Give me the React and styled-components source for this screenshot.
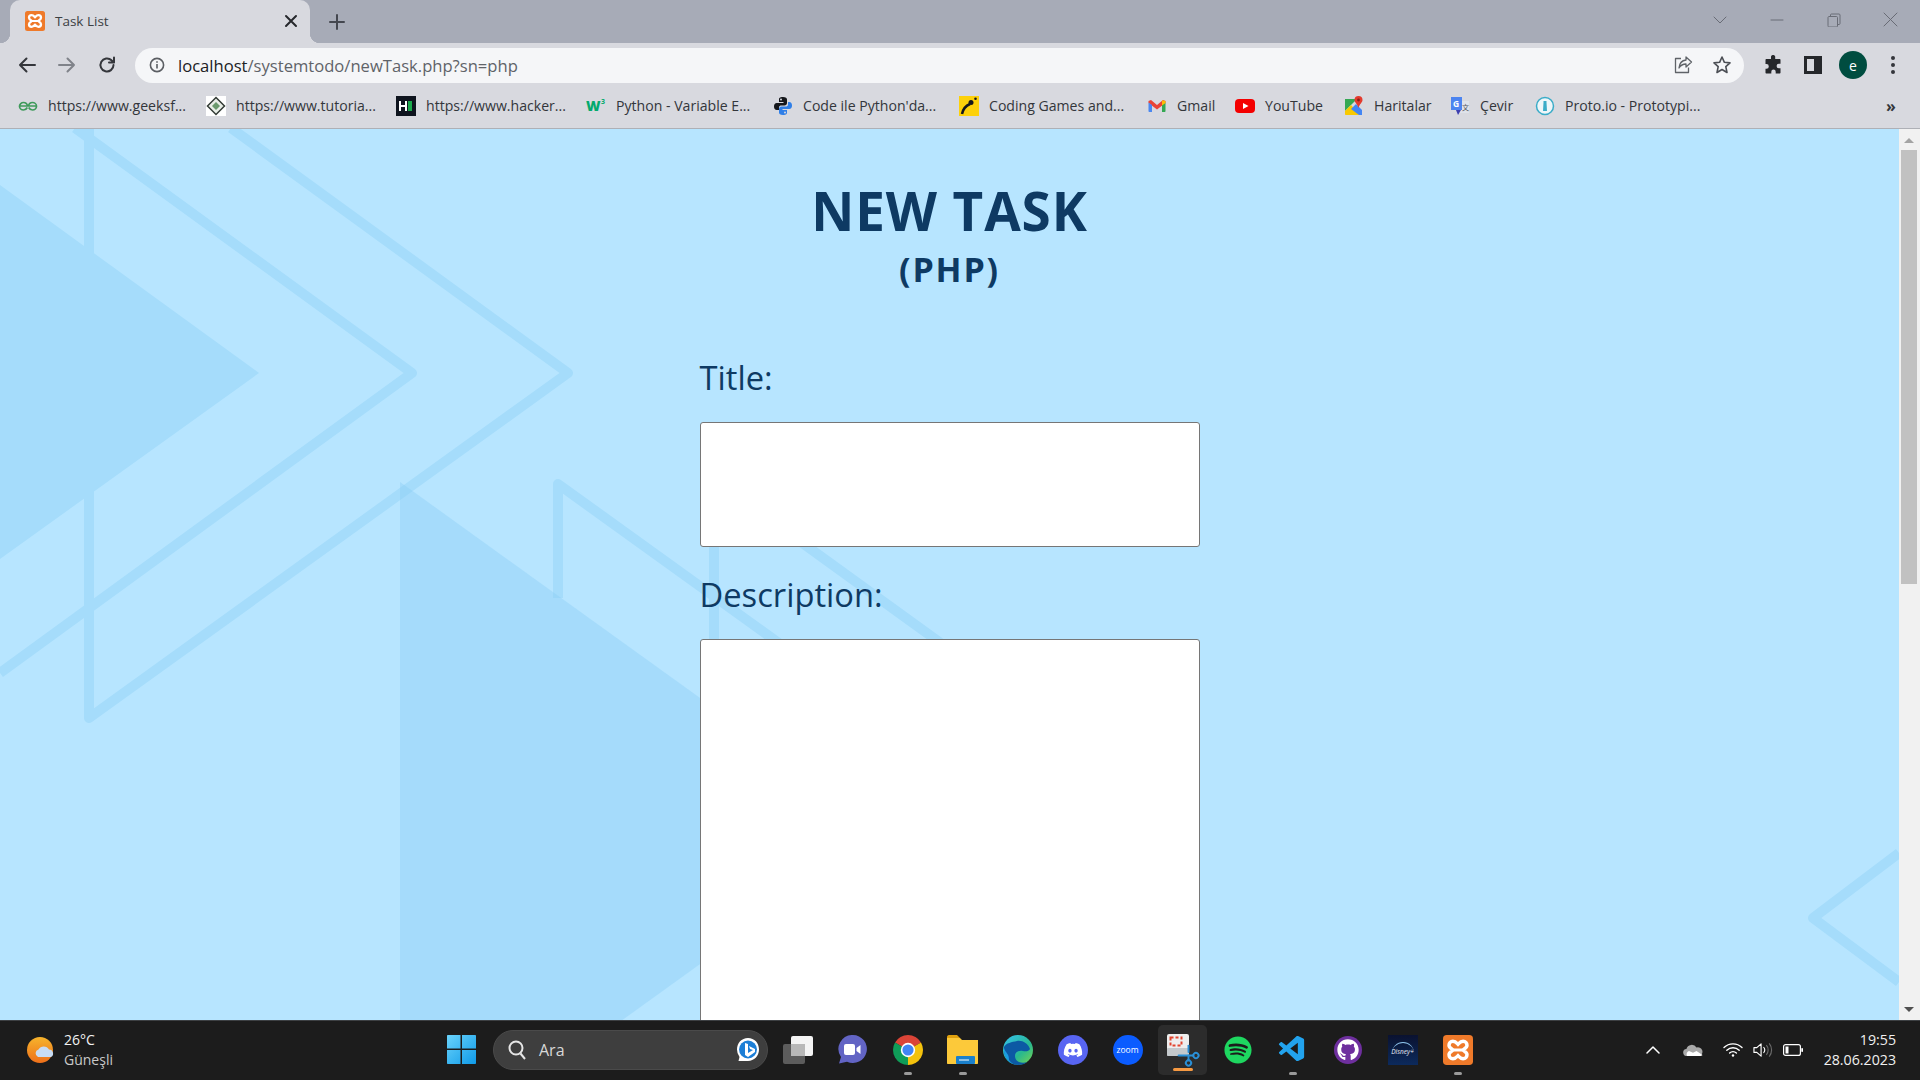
import React from 'react'
import styled, { createGlobalStyle } from 'styled-components'
import { FaDiscord, FaSpotify, FaGithub } from 'react-icons/fa'
import { VscVscode } from 'react-icons/vsc'
import { Scissors } from 'lucide-react'

const UI_FONT = '"Open Sans", "Noto Sans", sans-serif'

const GlobalStyle = createGlobalStyle`
    html, body, #root {
        margin: 0;
        padding: 0;
        height: 100%;
        overflow: hidden;
    }
    body {
        font-family: ${UI_FONT};
    }
`

const Screen = styled.div`
    width: 1920px;
    height: 1080px;
    display: flex;
    flex-direction: column;
    overflow: hidden;
`

/* browser chrome */
const TabStrip = styled.div`
    height: 43px;
    flex: none;
    display: flex;
    align-items: flex-end;
    padding-left: 10px;
    background-color: #a7abb7;
`

const Tab = styled.div`
    position: relative;
    width: 300px;
    height: 43px;
    box-sizing: border-box;
    padding: 0 12px 1px 15px;
    display: flex;
    align-items: center;
    gap: 10px;
    border-radius: 10px 10px 0 0;
    background-color: #d8d9df;

    &::before, &::after {
        content: '';
        position: absolute;
        bottom: 0;
        width: 10px;
        height: 10px;
    }
    &::before {
        left: -10px;
        background: radial-gradient(circle at 0 0, transparent 10px, #d8d9df 10.5px);
    }
    &::after {
        right: -10px;
        background: radial-gradient(circle at 100% 0, transparent 10px, #d8d9df 10.5px);
    }
`

const TabTitle = styled.span`
    flex: 1;
    font-size: 13.5px;
    color: #3c4043;
`

const NewTab = styled.div`
    width: 20px;
    height: 20px;
    margin: 0 0 11px 17px;
    color: #44474f;
`

const WindowControls = styled.div`
    margin-left: auto;
    height: 43px;
    display: flex;
    padding-right: 1px;
`

const WindowButton = styled.div`
    width: 57px;
    height: 39px;
    display: flex;
    align-items: center;
    justify-content: center;
    color: #696c76;
`

const Toolbar = styled.div`
    height: 44px;
    flex: none;
    display: flex;
    align-items: center;
    padding: 0 7px 0 7px;
    background-color: #d8d9df;
`

const ToolButton = styled.div`
    width: ${p => p.$width || 40}px;
    height: 34px;
    flex: none;
    display: flex;
    align-items: center;
    justify-content: center;
    color: ${p => p.$color || '#34363b'};
`

const UrlBar = styled.div`
    flex: 1;
    height: 35px;
    margin: 0 9px 0 8px;
    padding: 0 3px 0 14px;
    display: flex;
    align-items: center;
    border-radius: 18px;
    background-color: #f5f6f8;
    color: #5b5e63;
`

const UrlText = styled.div`
    flex: 1;
    margin-left: 13px;
    font-size: 16.6px;
    color: #5f6368;

    b {
        font-weight: 400;
        color: #202124;
    }
`

const Avatar = styled.div`
    width: 28px;
    height: 28px;
    display: flex;
    align-items: center;
    justify-content: center;
    border-radius: 50%;
    background-color: #004d40;
    color: #fff;
    font-size: 14px;
`

const BookmarkBar = styled.div`
    height: 37px;
    flex: none;
    display: flex;
    align-items: center;
    padding: 0 0 4px 18px;
    box-sizing: content-box;
    border-bottom: 1px solid #aeb0b6;
    background-color: #d8d9df;
`

const Bookmark = styled.div`
    width: ${p => p.$width}px;
    flex: none;
    display: flex;
    align-items: center;
    gap: 10px;
    font-size: 14.1px;
    color: #33363b;
    white-space: nowrap;

    svg {
        flex: none;
    }
`

const MoreBookmarks = styled.div`
    margin-left: auto;
    width: 34px;
    font-size: 16px;
    font-weight: 700;
    color: #34363b;
`

/* page */
const Viewport = styled.div`
    flex: 1;
    min-height: 0;
    display: flex;
`

const Page = styled.main`
    position: relative;
    flex: 1;
    overflow: hidden;
    background-color: #b7e5ff;
    color: #0e3a63;
`

const Backdrop = styled.svg`
    position: absolute;
    left: 0;
    top: -1px;
    width: 1899px;
    height: 892px;
`

const Content = styled.div`
    position: relative;
    width: 500px;
    margin: 0 auto;
    padding-top: 46px;
`

const Heading = styled.h1`
    margin: 0;
    font-size: 53px;
    line-height: 71px;
    font-weight: 700;
    letter-spacing: 0.9px;
    text-align: center;
`

const SubHeading = styled.h2`
    margin: 0 0 63px;
    font-size: 34px;
    line-height: 46px;
    font-weight: 700;
    letter-spacing: 1.8px;
    text-align: center;
`

const Label = styled.label`
    display: block;
    margin-bottom: 22px;
    font-size: 32.7px;
    line-height: 45px;
    font-weight: 400;
`

const TitleInput = styled.input`
    display: block;
    width: 100%;
    height: 125px;
    box-sizing: border-box;
    margin: 0 0 25px;
    border: 1px solid #767676;
    border-radius: 3px;
    background-color: #fff;
`

const DescriptionInput = styled.textarea`
    display: block;
    width: 100%;
    height: 500px;
    box-sizing: border-box;
    margin: 0;
    border: 1px solid #767676;
    border-radius: 3px;
    background-color: #fff;
`

const ScrollTrack = styled.div`
    position: relative;
    width: 21px;
    flex: none;
    background-color: #f1f1f1;
`

const ScrollThumb = styled.div`
    position: absolute;
    left: 2px;
    right: 3px;
    top: 21px;
    height: 434px;
    background-color: #c1c1c1;
`

const ScrollArrow = styled.div`
    position: absolute;
    left: 5px;
    ${p => p.$down ? 'bottom: 8px;' : 'top: 9px;'}
    border-left: 5px solid transparent;
    border-right: 5px solid transparent;
    ${p => p.$down ? 'border-top: 5px solid #505050;' : 'border-bottom: 5px solid #a3a3a3;'}
`

/* taskbar */
const Taskbar = styled.footer`
    height: 60px;
    flex: none;
    box-sizing: border-box;
    padding-bottom: 2px;
    display: flex;
    align-items: center;
    border-top: 1px solid #3d4043;
    background-color: #1c1c1c;
    color: #f2f2f2;
`

const Weather = styled.div`
    width: 447px;
    flex: none;
    box-sizing: border-box;
    padding-left: 27px;
    display: flex;
    align-items: center;
    gap: 9px;
`

const WeatherText = styled.div`
    font-size: 14px;
    line-height: 20px;

    span {
        display: block;
        color: #c9c9c9;
    }
`

const StartButton = styled.div`
    width: 46px;
    flex: none;
    display: flex;
`

const SearchBox = styled.div`
    width: 275px;
    height: 40px;
    flex: none;
    box-sizing: border-box;
    padding: 0 7px 0 14px;
    display: flex;
    align-items: center;
    gap: 13px;
    border: 1px solid #4a4a4a;
    border-radius: 20px;
    background-color: #3e3e3e;
    font-size: 16px;
    color: #d8d8d8;

    span {
        flex: 1;
    }
`

const TaskApps = styled.div`
    margin-left: 2px;
    display: flex;
    flex: none;
`

const TaskSlot = styled.div`
    position: relative;
    width: 55px;
    height: 50px;
    display: flex;
    align-items: center;
    justify-content: center;

    ${p => p.$active && `
        &::before {
            content: '';
            position: absolute;
            left: 3px;
            right: 3px;
            top: 0;
            bottom: 0;
            border-radius: 5px;
            background-color: #2c2c2c;
        }
    `}

    &::after {
        content: '';
        display: ${p => (p.$running || p.$active) ? 'block' : 'none'};
        position: absolute;
        bottom: ${p => p.$active ? '4px' : '0px'};
        left: 50%;
        width: ${p => p.$active ? '20px' : '8px'};
        height: 3px;
        margin-left: ${p => p.$active ? '-10px' : '-4px'};
        border-radius: 2px;
        background-color: ${p => p.$active ? '#f79a42' : '#9a9a9a'};
    }

    > * {
        position: relative;
    }
`

const AppDisc = styled.div`
    width: ${p => p.$size || 30}px;
    height: ${p => p.$size || 30}px;
    display: flex;
    align-items: center;
    justify-content: center;
    border-radius: 50%;
    background-color: ${p => p.$color};
    color: #fff;
    font-size: 8.5px;
`

const DisneyTile = styled.div`
    position: relative;
    width: 30px;
    height: 30px;
    display: flex;
    align-items: center;
    justify-content: center;
    padding-top: 4px;
    box-sizing: border-box;
    background: linear-gradient(#0a1230, #0c2a5c);
    color: #e8eef8;
    font-size: 6.5px;
    font-style: italic;
    overflow: hidden;

    &::before {
        content: '';
        position: absolute;
        left: 4px;
        top: 7px;
        width: 22px;
        height: 22px;
        border-radius: 50%;
        border-top: 1px solid #8fc6ee;
        box-sizing: border-box;
    }
`

const SnipBox = styled.div`
    width: 32px;
    height: 31px;
`

const SnipPad = styled.svg`
    display: block;
`

const SnipScissors = styled.div`
    position: absolute;
    left: 11px;
    top: 11px;
    color: #2a8fd6;
    line-height: 0;
    transform: rotate(-135deg);
`

const Tray = styled.div`
    margin-left: auto;
    display: flex;
    align-items: center;
    gap: 5px;
    padding-right: 24px;
`

const TrayIcons = styled.div`
    display: flex;
    align-items: center;
    flex: none;
`

const TrayIcon = styled.div`
    width: ${p => p.$width || 40}px;
    height: 20px;
    display: flex;
    align-items: center;
    justify-content: center;
`

const Clock = styled.div`
    width: 78px;
    font-size: 14.2px;
    line-height: 20px;
    text-align: right;
    color: #f0f0f0;
`

/* drawn icons */
const Xampp = ({ size = 20 }) => (
    <svg width={size} height={size} viewBox="0 0 20 20">
        <rect width="20" height="20" rx="2.5" fill="#ef7a2a" />
        <path d="M6.6 4.2C5 4.2 4 5.3 4 6.8 4 8.8 6.6 9.4 6.6 10S4 11.2 4 13.2c0 1.500 1 2.600 2.600 2.600 1.700 0 2.800-1.400 3.400-2 .6.6 1.700 2 3.400 2 1.600 0 2.600-1.100 2.600-2.600 0-2-2.600-2.600-2.600-3.200s2.600-1.200 2.600-3.200c0-1.500-1-2.600-2.600-2.600-1.700 0-2.800 1.400-3.400 2-.6-.6-1.700-2-3.400-2z" fill="none" stroke="#fff" strokeWidth="2.300" />
        <path d="M7 10h6" stroke="#fff" strokeWidth="2" />
    </svg>
)

const Line = ({ d, size = 20, width = 2, color = 'currentColor', box = 20 }) => (
    <svg width={size} height={size} viewBox={`0 0 ${box} ${box}`} fill="none" stroke={color} strokeWidth={width} strokeLinecap="round" strokeLinejoin="round">
        <path d={d} />
    </svg>
)

const InfoIcon = () => (
    <svg width="16" height="16" viewBox="0 0 16 16" fill="none" stroke="currentColor" strokeWidth="1.600">
        <circle cx="8" cy="8" r="6.600" />
        <path d="M8 7v4.500M8 4.200v1.600" />
    </svg>
)

const ShareIcon = () => (
    <svg width="20" height="20" viewBox="0 0 20 20" fill="none" stroke="#5f6368" strokeWidth="1.300" strokeLinejoin="round">
        <path d="M8 3.500H2.500v14h13v-5" />
        <path d="M13 2l5.500 5-5.500 5V9C9.500 9 7.500 10.500 6 13c.4-4.500 2.800-7.500 7-8z" />
    </svg>
)

const PuzzleIcon = () => (
    <svg width="20" height="20" viewBox="0 0 20 20" fill="#25272b">
        <path d="M8 1.500a2.200 2.200 0 0 1 4.200 0V4h4.300c.6 0 1 .4 1 1v3.800h-1.700a2.200 2.200 0 0 0 0 4.400h1.700v4.300c0 .6-.4 1-1 1h-3.800v-1.700a2.200 2.200 0 0 0-4.400 0V18.500H3.500c-.6 0-1-.4-1-1v-3.800h1a2.300 2.300 0 0 0 0-4.600h-1V5c0-.6.4-1 1-1H8z" />
    </svg>
)

const SidePanelIcon = () => (
    <svg width="18" height="18" viewBox="0 0 18 18">
        <path d="M0 0h18v18H0zM3 3v12h7V3z" fill="#25272b" fillRule="evenodd" />
    </svg>
)

const KebabIcon = () => (
    <svg width="4" height="18" viewBox="0 0 4 18" fill="#34363b">
        <circle cx="2" cy="2" r="2" />
        <circle cx="2" cy="9" r="2" />
        <circle cx="2" cy="16" r="2" />
    </svg>
)

const GeeksIcon = () => (
    <svg width="20" height="20" viewBox="0 0 20 20" fill="none" stroke="#3f9a5b" strokeWidth="1.700">
        <path d="M1 10h18M9.500 10C9 7.500 7.500 6.500 5.500 6.500S1.500 8 1.500 10.200 3.300 14 5.500 14c2 0 3-1 3.800-2.500M10.500 10c.5-2.500 2-3.500 4-3.500s4 1.500 4 3.700-1.800 3.800-4 3.800c-2 0-3-1-3.800-2.500" />
    </svg>
)

const TutorialsIcon = () => (
    <svg width="20" height="20" viewBox="0 0 20 20">
        <rect width="20" height="20" fill="#fff" />
        <path d="M10 1.500L18.500 10 10 18.500 1.500 10z" fill="#e9eee7" stroke="#343c36" strokeWidth="1.500" />
        <path d="M10 6l4 4-4 4-4-4z" fill="#6b9a6d" />
    </svg>
)

const HackerIcon = () => (
    <svg width="20" height="20" viewBox="0 0 20 20">
        <rect width="20" height="20" fill="#0e141e" />
        <path d="M4 5v10M10 5v10M4 10h6" stroke="#fff" strokeWidth="2" />
        <rect x="12" y="5" width="4" height="10" fill="#1ba94c" />
    </svg>
)

const W3Icon = () => (
    <svg width="20" height="20" viewBox="0 0 20 20">
        <text x="0" y="15" fontFamily="Open Sans" fontWeight="800" fontSize="14" fill="#04aa6d">W</text>
        <text x="15" y="8" fontFamily="Open Sans" fontWeight="700" fontSize="7" fill="#04aa6d">3</text>
    </svg>
)

const PythonIcon = () => (
    <svg width="20" height="20" viewBox="0 0 20 20">
        <path d="M10 1C6.500 1 6 2.300 6 3.500V6h4.500v1H3.800C2 7 1 8.500 1 10.500S2 14 3.800 14H6v-2.500C6 10 7 9.500 8.500 9.500h3c1.400 0 2.500-1 2.500-2.500V3.500C14 2 12.800 1 10 1z" fill="#15171c" />
        <path d="M10 19c3.500 0 4-1.300 4-2.500V14H9.500v-1h6.700C18 13 19 11.500 19 9.500S18 6 16.200 6H15v2.500c0 1.500-1 2-2.500 2h-4C7.100 10.500 6 11.500 6 13v3.500C6 18 7.200 19 10 19z" fill="#2f7fe8" />
        <circle cx="8" cy="3.500" r="1" fill="#d8d9df" />
        <circle cx="12" cy="16.500" r="1" fill="#d8d9df" />
    </svg>
)

const CodingGameIcon = () => (
    <svg width="20" height="20" viewBox="0 0 20 20">
        <rect width="20" height="20" fill="#fdd10a" />
        <path d="M3 18c1-5 3-8 8-10" fill="none" stroke="#15171c" strokeWidth="2.500" />
        <circle cx="12" cy="6.500" r="2.500" fill="#15171c" />
        <circle cx="16.500" cy="2.800" r="1.300" fill="#15171c" />
    </svg>
)

const GmailIcon = () => (
    <svg width="20" height="20" viewBox="0 0 19 20">
        <path d="M1 5l2.500-1L9.500 9l6-5 2.500 1v2l-8.500 6.500L1 7z" fill="#ea4335" />
        <path d="M1 6.500V15c0 .6.400 1 1 1h2.500V9z" fill="#4b88f0" />
        <path d="M18 6.500V15c0 .6-.400 1-1 1h-2.500V9z" fill="#34a853" />
        <path d="M14.500 4.200L18 5v2l-3.500 2.500z" fill="#fbbc04" />
    </svg>
)

const YoutubeIcon = () => (
    <svg width="20" height="20" viewBox="0 0 20 20">
        <rect y="3" width="20" height="14" rx="4" fill="#f40000" />
        <path d="M8 7l5.500 3L8 13z" fill="#fff" />
    </svg>
)

const MapsIcon = () => (
    <svg width="20" height="20" viewBox="0 0 20 20">
        <path d="M1 3h12l-12 12z" fill="#35a853" />
        <path d="M1 15l6-6 9 10H2c-.6 0-1-.4-1-1z" fill="#f9c900" />
        <path d="M7 13l5-5 6 6v5h-3z" fill="#4285f4" />
        <path d="M14.500 0a4 4 0 0 1 4 4c0 2.500-3 4-4 8-1-4-4-5.500-4-8a4 4 0 0 1 4-4z" fill="#e33b2e" />
        <circle cx="14.500" cy="4" r="1.400" fill="#8a1f16" />
    </svg>
)

const TranslateIcon = () => (
    <svg width="20" height="20" viewBox="0 0 20 20">
        <path d="M9 5h10v12H8z" fill="#dfe3ea" />
        <path d="M1 1h11v13H1z" fill="#4c84f0" />
        <path d="M6 14h5l-3 5z" fill="#3d3fb0" />
        <text x="3" y="11" fontFamily="Open Sans" fontWeight="700" fontSize="8.500" fill="#fff">G</text>
        <text x="12" y="14" fontFamily="Noto Sans CJK SC" fontSize="7" fill="#55585f">文</text>
    </svg>
)

const ProtoIcon = () => (
    <svg width="20" height="20" viewBox="0 0 20 20">
        <circle cx="10" cy="10" r="8.500" fill="#eef6f9" stroke="#3bacc8" strokeWidth="1.500" />
        <path d="M8.500 5h3v1.500l.5 8.500H8l.5-8.500z" fill="#3bacc8" />
    </svg>
)

const WeatherIcon = () => (
    <svg width="28" height="26" viewBox="0 0 28 26">
        <defs>
            <linearGradient id="sun" x1="0" y1="0" x2="0" y2="1">
                <stop offset="0" stopColor="#f6b42c" />
                <stop offset="1" stopColor="#ee6f1a" />
            </linearGradient>
        </defs>
        <circle cx="13" cy="13" r="13" fill="url(#sun)" />
        <path d="M11 20a4 4 0 0 1 .5-7.500 6 6 0 0 1 10.500 0 4 4 0 0 1 2 7.500z" fill="#c8dcf4" />
    </svg>
)

const WindowsIcon = () => (
    <svg width="29" height="29" viewBox="0 0 29 29">
        <defs>
            <linearGradient id="win" x1="0" y1="0" x2="1" y2="1">
                <stop offset="0" stopColor="#6ad3fb" />
                <stop offset="1" stopColor="#0f9ae8" />
            </linearGradient>
        </defs>
        <path d="M0 1c0-.6.4-1 1-1h12.500v13.500H0zM15 0h13c.6 0 1 .4 1 1v12.500H15zM0 15h13.500v14H1c-.6 0-1-.4-1-1zM15 15h14v13c0 .6-.4 1-1 1H15z" fill="url(#win)" />
    </svg>
)

const SearchIcon = () => (
    <svg width="18" height="20" viewBox="0 0 18 20" fill="none" stroke="#e6e6e6" strokeWidth="2">
        <circle cx="8" cy="8" r="6.500" />
        <path d="M12.500 13.500L17 19" />
    </svg>
)

const BingIcon = () => (
    <svg width="24" height="26" viewBox="0 0 24 26">
        <path d="M12 1c6.500 0 11 5 11 11.500S18 24 12 24H2.500L3.500 20A12 12 0 0 1 1 12.500C1 6 5.500 1 12 1z" fill="#fff" />
        <circle cx="12" cy="12.500" r="9" fill="#1c7ed6" />
        <path d="M9 6l3 1v9l5-3-3-1-1-3 6 3v3l-7 5-3-2z" fill="#fff" />
    </svg>
)

const TaskViewIcon = () => (
    <svg width="30" height="28" viewBox="0 0 30 28">
        <rect x="0" y="8" width="22" height="20" rx="2" fill="#5c5c5c" />
        <rect x="8" y="0" width="22" height="20" rx="2" fill="#f4f4f4" />
        <rect x="8" y="8" width="14" height="12" fill="#b8b8b8" />
    </svg>
)

const MeetIcon = () => (
    <svg width="29" height="29" viewBox="0 0 29 29">
        <path d="M15 0a14 14 0 1 1-6 26.700L1 28.500l2-6.500A14 14 0 0 1 15 0z" fill="#6264c4" />
        <rect x="6" y="9" width="11" height="11" rx="2" fill="#fff" />
        <path d="M18.500 13l4-3v9l-4-3z" fill="#fff" />
    </svg>
)

const ChromeIcon = () => (
    <svg width="30" height="30" viewBox="0 0 44 44">
        <path d="M22 22L2.950 11A22 22 0 0 1 41.050 11Z" fill="#db4437" />
        <path d="M22 22L41.050 11A22 22 0 0 1 22 44Z" fill="#f4c20d" />
        <path d="M22 22L22 44A22 22 0 0 1 2.950 11Z" fill="#0f9d58" />
        <circle cx="22" cy="22" r="10.500" fill="#fff" />
        <circle cx="22" cy="22" r="8.200" fill="#4285f4" />
    </svg>
)

const FolderIcon = () => (
    <svg width="31" height="29" viewBox="0 0 31 29">
        <path d="M0 2c0-1 .6-2 2-2h8l3 3h-13z" fill="#e0a10e" />
        <path d="M0 3h13l2 2h16v23c0 .6-.4 1-1 1H1c-.6 0-1-.4-1-1z" fill="#fcc93a" />
        <rect x="9" y="21" width="19" height="8" rx="1" fill="#1a80cc" />
        <path d="M12 25h10" stroke="#fff" strokeWidth="1" />
    </svg>
)

const EdgeIcon = () => (
    <svg width="30" height="30" viewBox="0 0 30 30">
        <defs>
            <linearGradient id="edgeTop" x1="0" y1="0" x2="1" y2="1">
                <stop offset="0" stopColor="#35c1f1" />
                <stop offset="0.6" stopColor="#28b890" />
                <stop offset="1" stopColor="#7bd64b" />
            </linearGradient>
        </defs>
        <circle cx="15" cy="15" r="15" fill="url(#edgeTop)" />
        <path d="M1 12C0 22 7 30 15 30c4 0 7-1 9-3-5 2-12 0-12-6 0-4 4-6 8-5 3 .8 6 0 7-2-2-6-8-9-13-8C9 7 3 8 1 12z" fill="#0c59a4" />
        <path d="M15 30c-8 0-15-7-14-17 2 6 5 5 5 12 2 3 5 5 9 5z" fill="#1b9de2" />
    </svg>
)

const SnipApp = () => (
    <SnipBox>
        <SnipPad width="22" height="22" viewBox="0 0 22 22">
            <rect width="22" height="22" rx="2" fill="#eeeeee" />
            <rect y="14" width="22" height="8" rx="1" fill="#c4c9cc" />
            <rect x="3.500" y="3.500" width="11" height="8" fill="none" stroke="#e2442f" strokeWidth="2" strokeDasharray="3 2" />
        </SnipPad>
        <SnipScissors><Scissors size={21} strokeWidth={2.200} /></SnipScissors>
    </SnipBox>
)

const CloudTray = () => (
    <svg width="20" height="12" viewBox="0 0 20 12">
        <path d="M4 12a3.500 3.500 0 0 1-.6-7A5.500 5.500 0 0 1 13.500 3.600 4.200 4.200 0 0 1 16.500 12z" fill="#a9a9a9" />
        <path d="M4 12a3.500 3.500 0 0 1 2-5l4 1.800 3.500-1.800 6 4c-.5.700-1.500 1-3 1z" fill="#fff" />
    </svg>
)

const WifiTray = () => (
    <svg width="20" height="15" viewBox="0 0 20 15" fill="none" stroke="#fff" strokeWidth="1.400" strokeLinecap="round">
        <path d="M1 5.500a13 13 0 0 1 18 0M3.800 8.300a9 9 0 0 1 12.400 0M6.600 11a5 5 0 0 1 6.800 0" />
        <circle cx="10" cy="13.500" r="1.200" fill="#fff" stroke="none" />
    </svg>
)

const VolumeTray = () => (
    <svg width="20" height="16" viewBox="0 0 21 16" fill="none" stroke="#fff" strokeWidth="1.200" strokeLinejoin="round">
        <path d="M1 5.500h3L8.500 1.500v13L4 10.500H1z" />
        <path d="M11 5a4 4 0 0 1 0 6" />
        <path d="M14 3a7.500 7.500 0 0 1 0 10M17 1a11 11 0 0 1 0 14" stroke="#6a6a6a" />
    </svg>
)

const BatteryTray = () => (
    <svg width="20" height="12" viewBox="0 0 20 12">
        <rect x=".6" y=".6" width="16.800" height="10.800" rx="2" fill="none" stroke="#fff" strokeWidth="1.200" />
        <rect x="2.500" y="2.500" width="3" height="7" fill="#fff" />
        <rect x="18.300" y="4" width="1.700" height="4" rx=".8" fill="#fff" />
    </svg>
)

const bookmarks = [
    { icon: <GeeksIcon />, label: 'https://www.geeksf...', width: 188 },
    { icon: <TutorialsIcon />, label: 'https://www.tutoria...', width: 190 },
    { icon: <HackerIcon />, label: 'https://www.hacker...', width: 190 },
    { icon: <W3Icon />, label: 'Python - Variable E...', width: 187 },
    { icon: <PythonIcon />, label: "Code ile Python'da...", width: 186 },
    { icon: <CodingGameIcon />, label: 'Coding Games and...', width: 188 },
    { icon: <GmailIcon />, label: 'Gmail', width: 88 },
    { icon: <YoutubeIcon />, label: 'YouTube', width: 109 },
    { icon: <MapsIcon />, label: 'Haritalar', width: 106 },
    { icon: <TranslateIcon />, label: 'Çevir', width: 85 },
    { icon: <ProtoIcon />, label: 'Proto.io - Prototypi...', width: 170 },
]

function App() {
    return (
        <Screen>
            <GlobalStyle />
            <TabStrip>
                <Tab>
                    <Xampp />
                    <TabTitle>Task List</TabTitle>
                    <Line size={14} box={14} d="M2 2l10 10M12 2L2 12" color="#26282c" />
                </Tab>
                <NewTab>
                    <Line d="M10 3v14M3 10h14" />
                </NewTab>
                <WindowControls>
                    <WindowButton><Line size={14} box={14} width={1} d="M1 4l6 6 6-6" /></WindowButton>
                    <WindowButton><Line size={14} box={14} width={1} d="M1 7h12" /></WindowButton>
                    <WindowButton><Line size={14} box={14} width={1} d="M1 4.500c0-.6.4-1 1-1h7.500c.6 0 1 .4 1 1V13c0 .6-.4 1-1 1H2c-.6 0-1-.4-1-1zM3.500 3.500V2c0-.6.4-1 1-1H12c.6 0 1 .4 1 1v8.500c0 .6-.4 1-1 1h-1.500" /></WindowButton>
                    <WindowButton><Line size={15} box={15} width={1} d="M1 1l13 13M14 1L1 14" /></WindowButton>
                </WindowControls>
            </TabStrip>

            <Toolbar>
                <ToolButton><Line d="M18 10H3M9.500 3.500L3 10l6.500 6.500" /></ToolButton>
                <ToolButton $color="#80838a"><Line d="M2 10h15M10.500 3.500L17 10l-6.500 6.500" /></ToolButton>
                <ToolButton><Line d="M16.500 10a6.500 6.500 0 1 1-2-4.700L17 7.500M17 2.500v5h-5" /></ToolButton>
                <UrlBar>
                    <InfoIcon />
                    <UrlText><b>localhost</b>/systemtodo/newTask.php?sn=php</UrlText>
                    <ToolButton $width={39}><ShareIcon /></ToolButton>
                    <ToolButton $width={39} $color="#4c4f55"><Line width={1.600} d="M10 2l2.400 5.300 5.600.6-4.200 3.800 1.200 5.800-5-3-5 3 1.200-5.800L2 7.900l5.600-.6z" /></ToolButton>
                </UrlBar>
                <ToolButton><PuzzleIcon /></ToolButton>
                <ToolButton><SidePanelIcon /></ToolButton>
                <ToolButton><Avatar>e</Avatar></ToolButton>
                <ToolButton><KebabIcon /></ToolButton>
            </Toolbar>

            <BookmarkBar>
                {bookmarks.map(b => (
                    <Bookmark key={b.label} $width={b.width}>{b.icon}{b.label}</Bookmark>
                ))}
                <MoreBookmarks>»</MoreBookmarks>
            </BookmarkBar>

            <Viewport>
                <Page>
                    <Backdrop viewBox="0 0 1899 892" fill="none">
                        <path d="M0 57L259 245 0 431z" fill="#a5dcfb" />
                        <g stroke="#a5dcfb" strokeWidth="10" strokeLinejoin="round">
                            <path d="M75 0L412 245 0 545" />
                            <path d="M231 0L568 245 89 590V0" />
                            <path d="M558 470V356L830 552" />
                            <path d="M714 520V351L1000 558" />
                            <path d="M1899 725L1813 790 1899 854" />
                        </g>
                        <path d="M400 354L885 703 400 1052z" fill="#8acef5" fillOpacity="0.4" />
                    </Backdrop>
                    <Content>
                        <Heading>NEW TASK</Heading>
                        <SubHeading>(PHP)</SubHeading>
                        <Label htmlFor="title">Title:</Label>
                        <TitleInput id="title" type="text" />
                        <Label htmlFor="description">Description:</Label>
                        <DescriptionInput id="description" />
                    </Content>
                </Page>
                <ScrollTrack>
                    <ScrollArrow />
                    <ScrollThumb />
                    <ScrollArrow $down />
                </ScrollTrack>
            </Viewport>

            <Taskbar>
                <Weather>
                    <WeatherIcon />
                    <WeatherText>26°C<span>Güneşli</span></WeatherText>
                </Weather>
                <StartButton><WindowsIcon /></StartButton>
                <SearchBox>
                    <SearchIcon />
                    <span>Ara</span>
                    <BingIcon />
                </SearchBox>
                <TaskApps>
                    <TaskSlot><TaskViewIcon /></TaskSlot>
                    <TaskSlot><MeetIcon /></TaskSlot>
                    <TaskSlot $running><ChromeIcon /></TaskSlot>
                    <TaskSlot $running><FolderIcon /></TaskSlot>
                    <TaskSlot><EdgeIcon /></TaskSlot>
                    <TaskSlot><AppDisc $color="#5865f2"><FaDiscord size={20} /></AppDisc></TaskSlot>
                    <TaskSlot><AppDisc $color="#0b5cff">zoom</AppDisc></TaskSlot>
                    <TaskSlot $active><SnipApp /></TaskSlot>
                    <TaskSlot><FaSpotify size={28} color="#1ed760" /></TaskSlot>
                    <TaskSlot $running><VscVscode size={31} color="#22a3ee" /></TaskSlot>
                    <TaskSlot><AppDisc $color="#6e2f9e" $size={28}><FaGithub size={22} /></AppDisc></TaskSlot>
                    <TaskSlot><DisneyTile>Disney+</DisneyTile></TaskSlot>
                    <TaskSlot $running><Xampp size={30} /></TaskSlot>
                </TaskApps>
                <Tray>
                    <TrayIcons>
                        <TrayIcon><Line size={14} box={14} color="#fff" width={1.500} d="M1 10l6-6 6 6" /></TrayIcon>
                        <TrayIcon><CloudTray /></TrayIcon>
                        <TrayIcon><WifiTray /></TrayIcon>
                        <TrayIcon $width={20}><VolumeTray /></TrayIcon>
                        <TrayIcon><BatteryTray /></TrayIcon>
                    </TrayIcons>
                    <Clock>19:55<br />28.06.2023</Clock>
                </Tray>
            </Taskbar>
        </Screen>
    )
}

export default App
